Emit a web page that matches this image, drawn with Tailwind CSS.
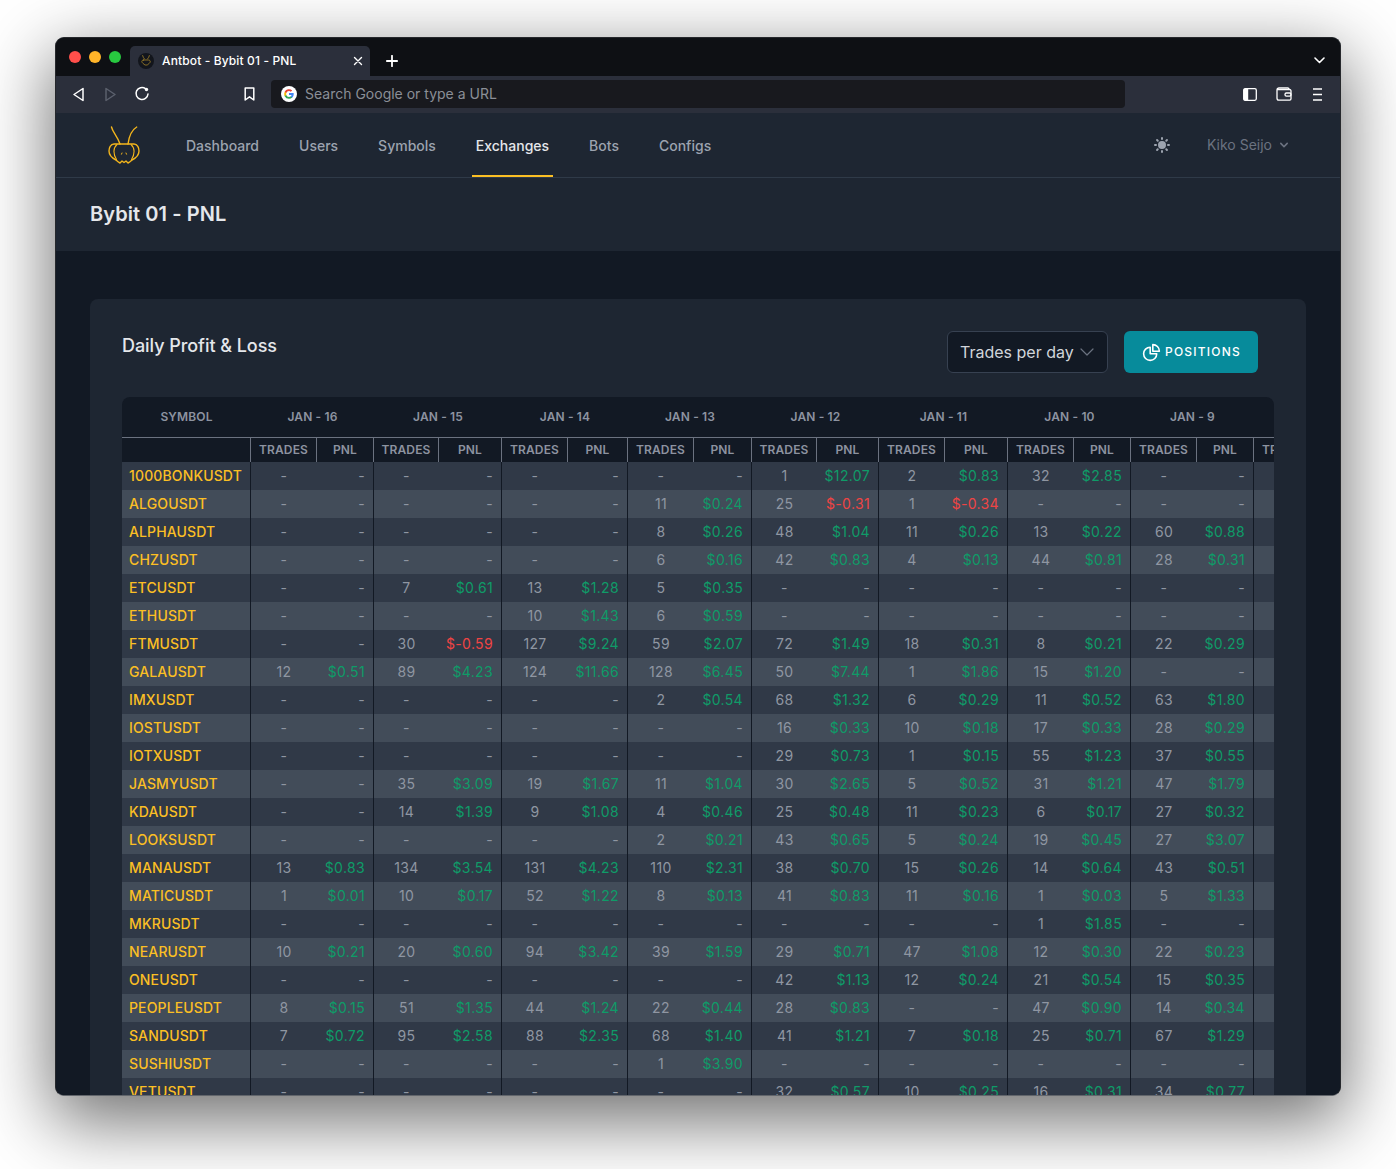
<!DOCTYPE html>
<html lang="en">
<head>
<meta charset="utf-8">
<title>Antbot - Bybit 01 - PNL</title>
<script src="https://cdn.jsdelivr.net/npm/@tailwindcss/browser@4"></script>
</head>
<body class="bg-white font-[Inter,sans-serif] overflow-hidden h-[1169px]">
<div class="ml-[55px] mt-[37px] w-[1286px] h-[1059px] rounded-[9px] overflow-hidden border border-[#26282c] border-b-[#62666c] bg-[#121924] shadow-[0_22px_70px_4px_rgba(0,0,0,0.56)] flex flex-col relative">
  <!-- title bar -->
  <div class="h-[38px] shrink-0 bg-[#0e1014] flex items-end relative">
    <div class="flex gap-2 absolute left-[13px] top-[13px]">
      <span class="block w-3 h-3 rounded-full bg-[#ff4f4b]"></span>
      <span class="block w-3 h-3 rounded-full bg-[#ffb429]"></span>
      <span class="block w-3 h-3 rounded-full bg-[#28c840]"></span>
    </div>
    <div class="ml-[74px] w-[240px] h-[30px] bg-[#2b2f3b] rounded-t-[5px] flex items-center pl-2 pr-[7px]">
      <svg width="16" height="16" viewBox="0 0 16 16" class="shrink-0" fill="none"><circle cx="8" cy="8" r="8" fill="#12151c"/><g stroke="#a5842b" stroke-width=".8" stroke-linecap="round"><path d="M4.600 2.600c.3 1.400 1 2.400 1.900 3.400M11.400 2.600c-.3 1.400-1 2.400-1.900 3.400"/><path d="M5.600 7h4.800c1.400 0 2 .9 1.800 1.900-.3 1.200-1.600 2-3 3.100H8c-.4 0-.6.1-1 0-1.400-1.100-2.700-1.900-3.100-3.100C3.600 7.900 4.200 7 5.600 7z"/></g></svg>
      <span class="ml-2 text-white text-xs font-medium tracking-[.011em] whitespace-nowrap">Antbot - Bybit 01 - PNL</span>
      <svg class="ml-auto" width="10" height="10" viewBox="0 0 10 10" fill="none" stroke="#fff" stroke-width="1.400" stroke-linecap="round"><path d="M1.500 1.500l7 7M8.500 1.500l-7 7"/></svg>
    </div>
    <svg class="ml-4 mb-[9px]" width="12" height="12" viewBox="0 0 12 12" fill="none" stroke="#fff" stroke-width="1.800" stroke-linecap="round"><path d="M6 .8v10.400M.8 6h10.400"/></svg>
    <svg class="absolute left-[1258px] top-[19px]" width="11" height="7" viewBox="0 0 11 7" fill="none" stroke="#fff" stroke-width="1.600" stroke-linecap="round" stroke-linejoin="round"><path d="M1 1l4.500 4.500L10 1"/></svg>
  </div>
  <!-- toolbar -->
  <div class="h-[37px] shrink-0 bg-[#2b2f3b] flex items-center relative">
    <svg class="ml-[16px] mb-[1px]" width="13" height="15" viewBox="0 0 13 15" fill="none" stroke="#fff" stroke-width="1.500" stroke-linejoin="round"><path d="M11 1.500v12L2 7.500z"/></svg>
    <svg class="ml-[19px] mb-[1px]" width="13" height="15" viewBox="0 0 13 15" fill="none" stroke="#5b606c" stroke-width="1.500" stroke-linejoin="round"><path d="M2 1.500v12l9-6z"/></svg>
    <svg class="ml-[17px] mb-[1px]" width="16" height="16" viewBox="0 0 16 16" fill="none" stroke="#fff" stroke-width="1.500" stroke-linecap="round"><path d="M11.500 2.600A6 6 0 1 0 14 8"/><circle cx="12.500" cy="3.500" r="1.700" fill="#fff" stroke="none"/></svg>
    <svg class="ml-[94px] mb-[1px]" width="11" height="14" viewBox="0 0 11 14" fill="none" stroke="#fff" stroke-width="1.500" stroke-linejoin="round"><path d="M1.200 1h8.600v12L5.500 9.800 1.200 13z"/></svg>
    <div class="ml-[16px] mb-[1px] w-[854px] h-[28px] bg-[#18191e] rounded-[4px] flex items-center pl-[10px]">
      <svg width="16" height="16" viewBox="0 0 16 16" fill="none"><circle cx="8" cy="8" r="8" fill="#fff"/><path d="M12.700 8.100c0-.4 0-.7-.1-1H8v1.900h2.600a2.300 2.300 0 0 1-1 1.500v1.200h1.600c1-.9 1.500-2.200 1.500-3.600z" fill="#4285f4"/><path d="M8 12.800c1.300 0 2.400-.4 3.200-1.200l-1.600-1.200c-.4.3-1 .5-1.600.5-1.200 0-2.300-.8-2.700-2H3.700v1.300A4.800 4.800 0 0 0 8 12.800z" fill="#34a853"/><path d="M5.300 8.900a2.900 2.900 0 0 1 0-1.800V5.800H3.700a4.800 4.800 0 0 0 0 4.400z" fill="#fbbc05"/><path d="M8 5.100c.7 0 1.300.2 1.800.7l1.400-1.400A4.800 4.800 0 0 0 3.700 5.800l1.600 1.300c.4-1.200 1.500-2 2.700-2z" fill="#ea4335"/></svg>
      <span class="ml-2 text-sm text-[#8b8f97]">Search Google or type a URL</span>
    </div>
    <svg class="absolute left-[1187px] top-[12px]" width="14" height="13" viewBox="0 0 14 13" fill="none"><rect x=".7" y=".7" width="12.600" height="11.600" rx="1.500" stroke="#fff" stroke-width="1.300"/><rect x=".7" y=".7" width="4.500" height="11.600" fill="#fff"/></svg>
    <svg class="absolute left-[1220px] top-[11px]" width="16" height="14" viewBox="0 0 16 14" fill="none" stroke="#fff" stroke-width="1.300"><path d="M13 2.500V2A1.300 1.300 0 0 0 11.700.8H3A2 2 0 0 0 1 2.800v8.400c0 1 .8 1.900 1.900 1.900h10.800c.7 0 1.300-.6 1.300-1.300V3.800c0-.7-.6-1.300-1.300-1.300H1.500"/><rect x="9" y="6" width="6" height="3.200" rx="1.400"/></svg>
    <svg class="absolute left-[1256px] top-[12px]" width="11" height="13" viewBox="0 0 11 13" fill="none" stroke="#fff" stroke-width="1.300"><path d="M1 1h9M1 6.500h9M1 12h9"/></svg>
  </div>
  <!-- app nav -->
  <nav class="h-[65px] shrink-0 bg-[#1e2632] border-b border-[#2f3a48] flex items-stretch relative">
    <svg class="ml-[51px] mt-[13px]" width="34" height="38" viewBox="0 0 34 38" fill="none" stroke="#f3b51c" stroke-width="1.400" stroke-linecap="round" stroke-linejoin="round"><path d="M4.500 1c1 5 6 9 8.500 17M29.700 1c-5 3-7.500 8-8.700 17"/><path d="M7 18h20c3.500 0 5 4 5 7 0 4-3 7-7 9-1 1-2 2-4 3l-2-2-2 1.500-2-1.500-2 2c-2-1-3-2-4-3-4-2-7-5-7-9 0-3 1.500-7 5-7z"/><path d="M10 18.500c-4 3.500-4 9.500-.5 15M24 18.500c4 3.500 4 9.500.5 15" stroke-width="1.100"/><path d="M15 27l-.5 1.200M19 27l.5 1.200" stroke-width="1"/></svg>
    <div class="ml-[41px] flex gap-8 text-sm font-medium">
      <a class="px-1 pt-[4px] flex items-center border-b-2 border-transparent text-[#9ca3af]">Dashboard</a>
      <a class="px-1 pt-[4px] flex items-center border-b-2 border-transparent text-[#9ca3af]">Users</a>
      <a class="px-1 pt-[4px] flex items-center border-b-2 border-transparent text-[#9ca3af]">Symbols</a>
      <a class="px-1 pt-[4px] flex items-center border-b-2 border-[#fbbf24] text-[#e5e7eb]">Exchanges</a>
      <a class="px-1 pt-[4px] flex items-center border-b-2 border-transparent text-[#9ca3af]">Bots</a>
      <a class="px-1 pt-[4px] flex items-center border-b-2 border-transparent text-[#9ca3af]">Configs</a>
    </div>
    <div class="ml-auto mr-[48px] flex items-center text-sm text-[#6b7280]">
      <svg width="20" height="20" viewBox="0 0 20 20" fill="#9ca3af"><path d="M10 2a1 1 0 0 1 1 1v1a1 1 0 1 1-2 0V3a1 1 0 0 1 1-1zm4 8a4 4 0 1 1-8 0 4 4 0 0 1 8 0zm-.460 4.950.707.707a1 1 0 0 0 1.414-1.414l-.707-.707a1 1 0 0 0-1.414 1.414zm2.120-10.607a1 1 0 0 1 0 1.414l-.706.707a1 1 0 1 1-1.414-1.414l.707-.707a1 1 0 0 1 1.414 0zM17 11a1 1 0 1 0 0-2h-1a1 1 0 1 0 0 2h1zm-7 4a1 1 0 0 1 1 1v1a1 1 0 1 1-2 0v-1a1 1 0 0 1 1-1zM5.050 6.464A1 1 0 1 0 6.465 5.050l-.708-.707a1 1 0 0 0-1.414 1.414l.707.707zm1.414 8.486-.707.707a1 1 0 0 1-1.414-1.414l.707-.707a1 1 0 0 1 1.414 1.414zM4 11a1 1 0 1 0 0-2H3a1 1 0 0 0 0 2h1z"/></svg>
      <span class="ml-[35px]">Kiko Seijo</span>
      <svg class="ml-1" width="16" height="16" viewBox="0 0 20 20" fill="#6b7280"><path fill-rule="evenodd" d="M5.293 7.293a1 1 0 0 1 1.414 0L10 10.586l3.293-3.293a1 1 0 1 1 1.414 1.414l-4 4a1 1 0 0 1-1.414 0l-4-4a1 1 0 0 1 0-1.414z" clip-rule="evenodd"/></svg>
    </div>
  </nav>
  <!-- page header -->
  <header class="h-[73px] shrink-0 bg-[#1e2632] pl-[34px] pb-[2px] flex items-center">
    <h1 class="text-xl font-semibold tracking-[.004em] text-[#e5e7eb]">Bybit 01 - PNL</h1>
  </header>
  <!-- main -->
  <main class="flex-1 min-h-0 px-[34px] pt-[48px] bg-[#121924]">
    <section class="bg-[#1e2632] rounded-lg p-8 pb-0 h-[1000px]">
      <div class="flex items-start justify-between pr-4 h-[42px]">
        <h2 class="text-lg font-medium leading-7 pt-[1px] tracking-[-.003em] text-[#e5e7eb]">Daily Profit &amp; Loss</h2>
        <div class="flex gap-4">
          <div class="w-[161px] h-[42px] bg-[#121924] border border-[#374151] rounded-md flex items-center pl-[12px] text-base text-[#d1d5db]">
            Trades per day
            <svg class="ml-[3px]" width="20" height="20" viewBox="0 0 20 20" fill="none" stroke="#6b7280" stroke-width="1.200" stroke-linecap="round" stroke-linejoin="round"><path d="M4 7l6 6 6-6"/></svg>
          </div>
          <button class="w-[134px] h-[42px] bg-[#078b9b] rounded-md flex items-center justify-center gap-[3px] text-xs font-medium tracking-widest text-white">
            <svg width="21" height="21" viewBox="0 0 24 24" fill="none" stroke="#fff" stroke-width="1.800" stroke-linecap="round" stroke-linejoin="round"><path d="M10.500 6a7.500 7.500 0 1 0 7.500 7.500h-7.500V6z"/><path d="M13.500 10.500H21A7.500 7.500 0 0 0 13.500 3v7.500z"/></svg>
            POSITIONS
          </button>
        </div>
      </div>
      <div class="mt-6 w-[1152px] overflow-hidden rounded-t-lg bg-[#121924]">
        <div id="t" class="w-[1298px]"></div>
      </div>
    </section>
  </main>
</div>
<script>
const days = ['JAN - 16','JAN - 15','JAN - 14','JAN - 13','JAN - 12','JAN - 11','JAN - 10','JAN - 9'];
const data = [
['1000BONKUSDT','- - - - 1:12.07 2:0.83 32:2.85 -'],
['ALGOUSDT','- - - 11:0.24 25:-0.31 1:-0.34 - -'],
['ALPHAUSDT','- - - 8:0.26 48:1.04 11:0.26 13:0.22 60:0.88'],
['CHZUSDT','- - - 6:0.16 42:0.83 4:0.13 44:0.81 28:0.31'],
['ETCUSDT','- 7:0.61 13:1.28 5:0.35 - - - -'],
['ETHUSDT','- - 10:1.43 6:0.59 - - - -'],
['FTMUSDT','- 30:-0.59 127:9.24 59:2.07 72:1.49 18:0.31 8:0.21 22:0.29'],
['GALAUSDT','12:0.51 89:4.23 124:11.66 128:6.45 50:7.44 1:1.86 15:1.20 -'],
['IMXUSDT','- - - 2:0.54 68:1.32 6:0.29 11:0.52 63:1.80'],
['IOSTUSDT','- - - - 16:0.33 10:0.18 17:0.33 28:0.29'],
['IOTXUSDT','- - - - 29:0.73 1:0.15 55:1.23 37:0.55'],
['JASMYUSDT','- 35:3.09 19:1.67 11:1.04 30:2.65 5:0.52 31:1.21 47:1.79'],
['KDAUSDT','- 14:1.39 9:1.08 4:0.46 25:0.48 11:0.23 6:0.17 27:0.32'],
['LOOKSUSDT','- - - 2:0.21 43:0.65 5:0.24 19:0.45 27:3.07'],
['MANAUSDT','13:0.83 134:3.54 131:4.23 110:2.31 38:0.70 15:0.26 14:0.64 43:0.51'],
['MATICUSDT','1:0.01 10:0.17 52:1.22 8:0.13 41:0.83 11:0.16 1:0.03 5:1.33'],
['MKRUSDT','- - - - - - 1:1.85 -'],
['NEARUSDT','10:0.21 20:0.60 94:3.42 39:1.59 29:0.71 47:1.08 12:0.30 22:0.23'],
['ONEUSDT','- - - - 42:1.13 12:0.24 21:0.54 15:0.35'],
['PEOPLEUSDT','8:0.15 51:1.35 44:1.24 22:0.44 28:0.83 - 47:0.90 14:0.34'],
['SANDUSDT','7:0.72 95:2.58 88:2.35 68:1.40 41:1.21 7:0.18 25:0.71 67:1.29'],
['SUSHIUSDT','- - - 1:3.90 - - - -'],
['VETUSDT','- - - - 32:0.57 10:0.25 16:0.31 34:0.77'],
];
const rowTop = 'grid grid-cols-[129px_123px_128px_126px_124px_127px_129px_123px_123px_66px] h-[41px] border-b border-[#6b7280]';
const rowSub = 'grid grid-cols-[129px_66px_57px_65px_63px_66px_60px_66px_58px_65px_62px_66px_63px_66px_57px_66px_57px_66px] h-[24px]';
const rowBody = 'grid grid-cols-[129px_66px_57px_65px_63px_66px_60px_66px_58px_65px_62px_66px_63px_66px_57px_66px_57px_66px] h-7';
const th1 = 'flex items-center justify-center text-xs font-semibold tracking-[.012em] text-[#8d93a0]';
const th2 = 'flex items-center justify-center border-r border-[#6b7280] text-xs font-semibold tracking-[.012em] text-[#8d93a0]';
const tdSym = 'flex items-center pl-[7px] border-r border-[#121924] text-sm font-medium tracking-[.01em] text-[#fbbf24] whitespace-nowrap';
const tdTr = 'flex items-center justify-center text-sm tracking-wide text-[#8f96a2]';
const tdPnl = 'flex items-center justify-end pr-2 border-r border-[#121924] text-sm tracking-wide';
const green = 'text-[#0f9b68]';
const red = 'text-[#ef4444]';
const dash = 'text-[#8f96a2]';
const rowA = 'bg-[#303947]';
const rowB = 'bg-[#424c59]';
let h = '<div class="'+rowTop+'"><div class="'+th1+'">SYMBOL</div>' + days.map(d => '<div class="'+th1+'">'+d+'</div>').join('') + '</div>';
h += '<div class="'+rowSub+'"><div class="'+th2+'"></div>' + days.map(() => '<div class="'+th2+'">TRADES</div><div class="'+th2+'">PNL</div>').join('') + '<div class="'+th2+'">TRADES</div></div>';
h += data.map((r,i) => {
  const cells = r[1].split(' ').map(c => {
    if (c === '-') return '<div class="'+tdTr+'">-</div><div class="'+tdPnl+' '+dash+'">-</div>';
    const [t,p] = c.split(':');
    return '<div class="'+tdTr+'">'+t+'</div><div class="'+tdPnl+' '+(p[0]==='-'?red:green)+'">$'+p+'</div>';
  }).join('');
  return '<div class="'+rowBody+' '+(i%2?rowB:rowA)+'"><div class="'+tdSym+'">'+r[0]+'</div>'+cells+'<div></div></div>';
}).join('');
document.getElementById('t').innerHTML = h;
</script>
</body>
</html>
